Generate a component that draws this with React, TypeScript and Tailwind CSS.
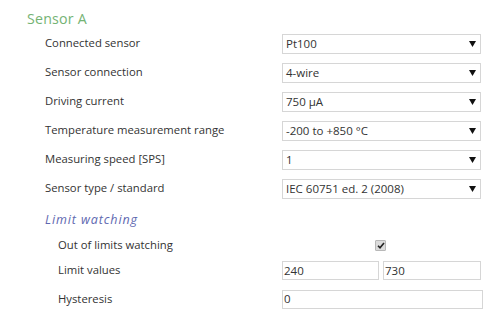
import React from "react";

const font = { fontFamily: '"Open Sans", "Noto Sans", sans-serif' };

function Select({ value }: { value: string }) {
  return (
    <div className="w-[199px] h-[20px] border border-[#d6d6d6] bg-white flex items-center justify-between pl-[3px] pr-[4px] text-[11.5px] text-[#333]">
      <span>{value}</span>
      <svg width="7" height="6" viewBox="0 0 7 6">
        <path d="M0 0 H7 L3.5 6 Z" fill="#111" />
      </svg>
    </div>
  );
}

function Row({ label, children, indent = false, h = "h-[29px]" }: { label: string; children: React.ReactNode; indent?: boolean; h?: string }) {
  return (
    <div className={`flex items-center ${h}`}>
      <div className={`${indent ? "w-[255px] pl-[31px]" : "w-[255px] pl-[18px]"} text-[11.3px] text-[#333]`}>{label}</div>
      <div className="flex items-center">{children}</div>
    </div>
  );
}

export default function App() {
  const rows: [string, string][] = [
    ["Connected sensor", "Pt100"],
    ["Sensor connection", "4-wire"],
    ["Driving current", "750 µA"],
    ["Temperature measurement range", "-200 to +850 °C"],
    ["Measuring speed [SPS]", "1"],
    ["Sensor type / standard", "IEC 60751 ed. 2 (2008)"],
  ];
  return (
    <div className="w-[500px] h-[326px] bg-white overflow-hidden pl-[27px] pt-[10px]" style={font}>
      <div className="h-[19px] flex items-center text-[14.2px] text-[#74b374] leading-none tracking-[0.2px]">Sensor A</div>
      {rows.map(([l, v]) => (
        <Row key={l} label={l}>
          <Select value={v} />
        </Row>
      ))}
      <div className="h-[28px] flex items-center pl-[18px] mt-[3px] text-[12.5px] italic text-[#6068b0] tracking-[0.9px]">Limit watching</div>
      <Row label="Out of limits watching" indent h="h-[22px]">
        <div className="w-[197px] flex justify-center">
          <span className="w-[11px] h-[11px] bg-[#dcdcdc] border border-[#b8b8b8] rounded-[1px] flex items-center justify-center">
            <svg width="8" height="7" viewBox="0 0 8 7">
              <path d="M1 3.8 L3 5.8 L7 1" stroke="#222" strokeWidth="1.6" fill="none" />
            </svg>
          </span>
        </div>
      </Row>
      <Row label="Limit values" indent>
        <div className="flex gap-[4px]">
          <div className="w-[97px] h-[19px] border border-[#d6d6d6] flex items-center pl-[1px] text-[11.5px] text-[#333]">240</div>
          <div className="w-[98px] h-[19px] border border-[#d6d6d6] flex items-center pl-[1px] text-[11.5px] text-[#333]">730</div>
        </div>
      </Row>
      <Row label="Hysteresis" indent h="h-[28px]">
        <div className="w-[201px] h-[19px] border border-[#d6d6d6] flex items-center pl-[1px] text-[11.5px] text-[#333]">0</div>
      </Row>
    </div>
  );
}
